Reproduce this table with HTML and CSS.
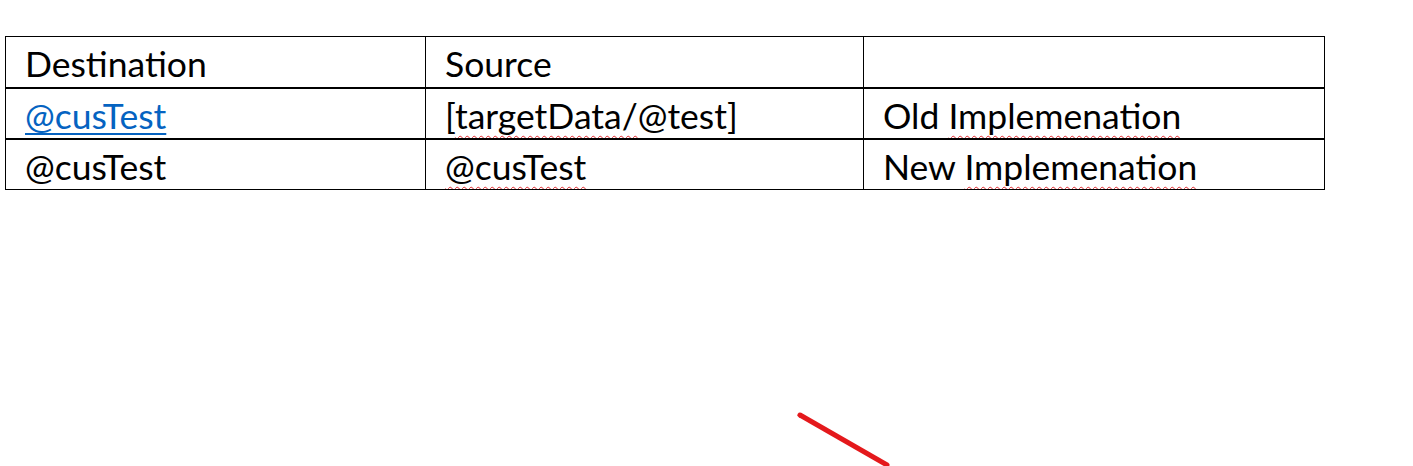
FILE: index.html
```html
<!DOCTYPE html>
<html>
<head>
<meta charset="utf-8">
<link rel="stylesheet" href="styles.css">
</head>
<body>
<div class="page">
  <table class="grid">
    <colgroup>
      <col class="c1"><col class="c2"><col class="c3">
    </colgroup>
    <tr class="r1">
      <td><span class="t">Destination</span></td>
      <td><span class="t">Source</span></td>
      <td></td>
    </tr>
    <tr class="r2">
      <td><a class="link t" href="#">@cusTest</a></td>
      <td><span class="t">[<span class="spell">targetData/</span>@test]</span></td>
      <td><span class="t">Old <span class="spell">Implemenation</span></span></td>
    </tr>
    <tr class="r3">
      <td><span class="t">@cusTest</span></td>
      <td><span class="t"><span class="spell">@cusTest</span></span></td>
      <td><span class="t">New <span class="spell">Implemenation</span></span></td>
    </tr>
  </table>
  <svg class="mark" width="100" height="60" viewBox="0 0 100 60">
    <line x1="4" y1="4" x2="91" y2="54" stroke="#e4191c" stroke-width="5" stroke-linecap="round"/>
  </svg>
</div>
</body>
</html>
```
FILE: styles.css
```css
html, body {
  margin: 0;
  padding: 0;
  background: #ffffff;
}
.page {
  position: relative;
  width: 1413px;
  height: 466px;
  padding: 36px 0 0 5px;
  box-sizing: border-box;
  font-family: "Lato", "Open Sans", sans-serif;
  color: #000;
}
.grid {
  border-collapse: collapse;
  table-layout: fixed;
  width: 1319px;
}
.c1 { width: 420px; }
.c2 { width: 438px; }
.c3 { width: 461px; }
.grid td {
  border-left: 1px solid #000;
  border-right: 1px solid #000;
  padding: 4px 0 0 19px;
  vertical-align: top;
  font-size: 35.5px;
  line-height: 45px;
  white-space: nowrap;
  overflow: hidden;
  box-sizing: border-box;
}
.r1 td { border-top: 1px solid #000; height: 51px; }
.r2 td { border-top: 2px solid #000; height: 50px; }
.r3 td { border-top: 2px solid #000; border-bottom: 1px solid #000; height: 50px; }
.link {
  color: #0563c1;
  text-decoration: underline;
  text-decoration-thickness: 2px;
  text-underline-offset: 4px;
  text-decoration-skip-ink: none;
}
.spell {
  text-decoration: underline wavy #e0262b;
  text-decoration-thickness: 1px;
  text-underline-offset: 6px;
  text-decoration-skip-ink: none;
}
.mark {
  position: absolute;
  left: 796px;
  top: 411px;
}
```
